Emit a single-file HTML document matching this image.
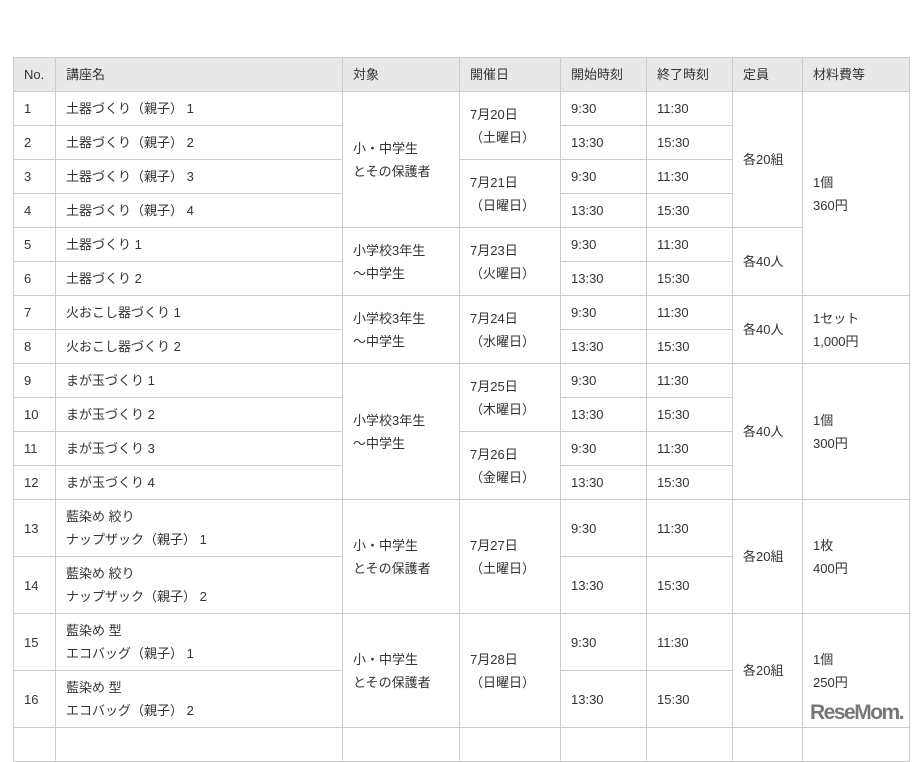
<!DOCTYPE html>
<html><head><meta charset="utf-8"><style>
body{margin:0;background:#fff;width:921px;height:736px;overflow:hidden;position:relative;font-family:"Liberation Sans","Noto Sans CJK JP",sans-serif;font-size:13px;color:#333}
table{position:absolute;left:13px;top:57px;border-collapse:collapse;table-layout:fixed;width:897px}
td,th{border:1px solid #ccc;padding:0 0 0 10px;text-align:left;font-weight:normal;vertical-align:middle;line-height:23px;white-space:nowrap}
th{background:#e8e8e8;height:33px}
tr.s td{height:33px}
tr.t td{height:56px}
.logo{position:absolute;left:810px;top:701px;font:bold 21px "Liberation Sans",sans-serif;color:#777;letter-spacing:-1.5px}
</style></head><body>
<table>
<colgroup><col style="width:42px"><col style="width:287px"><col style="width:117px"><col style="width:101px"><col style="width:86px"><col style="width:86px"><col style="width:70px"><col style="width:107px"></colgroup>
<tr><th>No.</th><th>講座名</th><th>対象</th><th>開催日</th><th>開始時刻</th><th>終了時刻</th><th>定員</th><th>材料費等</th></tr>
<tr class="s"><td>1</td><td>土器づくり（親子） 1</td><td rowspan="4">小・中学生<br>とその保護者</td><td rowspan="2">7月20日<br>（土曜日）</td><td>9:30</td><td>11:30</td><td rowspan="4">各20組</td><td rowspan="6">1個<br>360円</td></tr>
<tr class="s"><td>2</td><td>土器づくり（親子） 2</td><td>13:30</td><td>15:30</td></tr>
<tr class="s"><td>3</td><td>土器づくり（親子） 3</td><td rowspan="2">7月21日<br>（日曜日）</td><td>9:30</td><td>11:30</td></tr>
<tr class="s"><td>4</td><td>土器づくり（親子） 4</td><td>13:30</td><td>15:30</td></tr>
<tr class="s"><td>5</td><td>土器づくり 1</td><td rowspan="2">小学校3年生<br>～中学生</td><td rowspan="2">7月23日<br>（火曜日）</td><td>9:30</td><td>11:30</td><td rowspan="2">各40人</td></tr>
<tr class="s"><td>6</td><td>土器づくり 2</td><td>13:30</td><td>15:30</td></tr>
<tr class="s"><td>7</td><td>火おこし器づくり 1</td><td rowspan="2">小学校3年生<br>～中学生</td><td rowspan="2">7月24日<br>（水曜日）</td><td>9:30</td><td>11:30</td><td rowspan="2">各40人</td><td rowspan="2">1セット<br>1,000円</td></tr>
<tr class="s"><td>8</td><td>火おこし器づくり 2</td><td>13:30</td><td>15:30</td></tr>
<tr class="s"><td>9</td><td>まが玉づくり 1</td><td rowspan="4">小学校3年生<br>～中学生</td><td rowspan="2">7月25日<br>（木曜日）</td><td>9:30</td><td>11:30</td><td rowspan="4">各40人</td><td rowspan="4">1個<br>300円</td></tr>
<tr class="s"><td>10</td><td>まが玉づくり 2</td><td>13:30</td><td>15:30</td></tr>
<tr class="s"><td>11</td><td>まが玉づくり 3</td><td rowspan="2">7月26日<br>（金曜日）</td><td>9:30</td><td>11:30</td></tr>
<tr class="s"><td>12</td><td>まが玉づくり 4</td><td>13:30</td><td>15:30</td></tr>
<tr class="t"><td>13</td><td>藍染め 絞り<br>ナップザック（親子） 1</td><td rowspan="2">小・中学生<br>とその保護者</td><td rowspan="2">7月27日<br>（土曜日）</td><td>9:30</td><td>11:30</td><td rowspan="2">各20組</td><td rowspan="2">1枚<br>400円</td></tr>
<tr class="t"><td>14</td><td>藍染め 絞り<br>ナップザック（親子） 2</td><td>13:30</td><td>15:30</td></tr>
<tr class="t"><td>15</td><td>藍染め 型<br>エコバッグ（親子） 1</td><td rowspan="2">小・中学生<br>とその保護者</td><td rowspan="2">7月28日<br>（日曜日）</td><td>9:30</td><td>11:30</td><td rowspan="2">各20組</td><td rowspan="2">1個<br>250円</td></tr>
<tr class="t"><td>16</td><td>藍染め 型<br>エコバッグ（親子） 2</td><td>13:30</td><td>15:30</td></tr>
<tr class="s"><td></td><td></td><td></td><td></td><td></td><td></td><td></td><td></td></tr>
</table>
<div class="logo">ReseMom.</div>
</body></html>
